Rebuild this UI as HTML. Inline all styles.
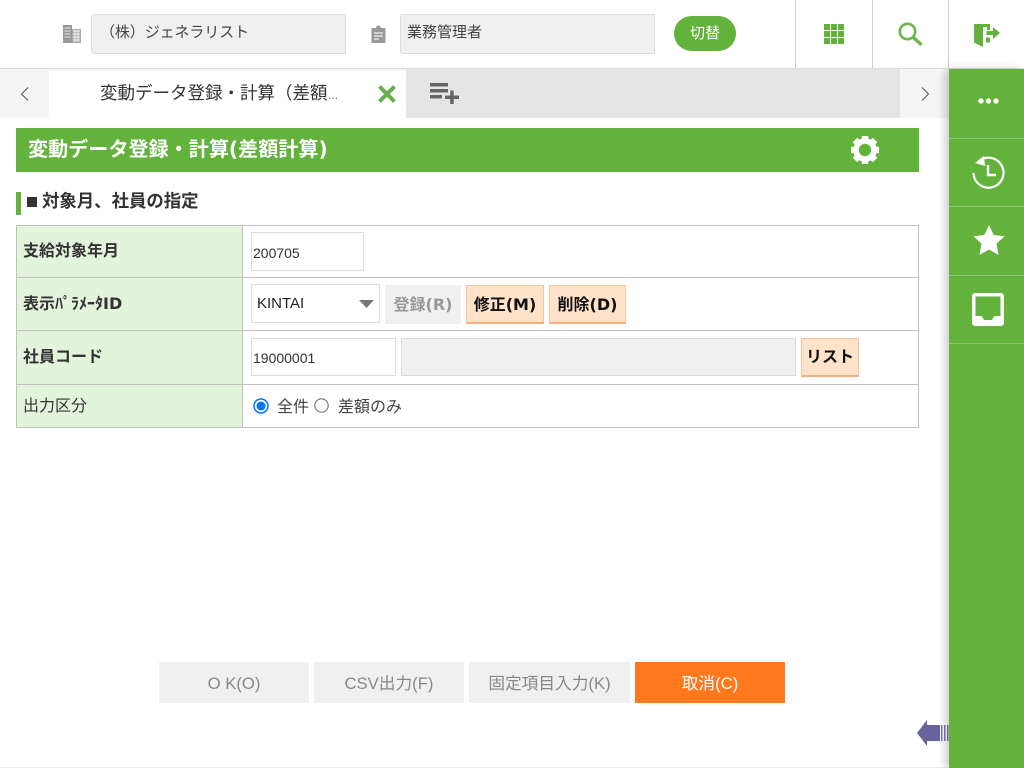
<!DOCTYPE html>
<html lang="ja"><head><meta charset="utf-8"><title>変動データ登録・計算</title>
<style>
html,body{margin:0;padding:0;width:1024px;height:768px;overflow:hidden;background:#fff}
body{position:relative;font-family:"Liberation Sans","Noto Sans CJK JP",sans-serif;color:#333;font-size:15px}
.a{position:absolute;box-sizing:border-box;white-space:nowrap}
.dj{font-family:"DejaVu Sans","Noto Sans CJK JP",sans-serif}
.f{background:#f0f0f0;border:1px solid #dcdcdc;line-height:36px;font-size:15px;color:#444}
.v{background:#d0d0d0;width:1px;top:0;height:68px}
.lab{left:17px;width:225px;background:#e3f4dc}
.lt{left:23px;font-size:16px;color:#333;line-height:22px}
.inp{background:#fff;border:1px solid #dcdcdc;font-size:14px;color:#333;padding-left:1px}
.btn{background:#ffe3c8;border:1px solid #f7c39c;border-bottom:2px solid #f5ae7c;color:#111;font-weight:bold;font-size:16px;text-align:center;line-height:37px}
.bb{top:662px;height:41px;background:#f0f0f0;color:#888;text-align:center;font-size:16.700px;line-height:43px}
.hl{left:17px;width:901px;height:1px;background:#c0c0c0}
.sd{left:949px;width:75px;height:1px;background:#8cc673}
</style></head><body>
<div class="a" style="left:0;top:0;width:1024px;height:69px;background:#fff;border-bottom:1px solid #ddd;box-shadow:0 1px 2px rgba(0,0,0,.08)"></div>
<svg class="a" style="left:63px;top:25px" width="18" height="18" viewBox="0 0 18 18"><rect x="0" y="0" width="9" height="18" fill="#999"/><path d="M1.500 3h6M1.500 6h6M1.500 9h6M1.500 12h6" stroke="#e4e4e4" stroke-width="1"/><rect x="9" y="4" width="9" height="14" fill="#aaa"/><path d="M10 6h7M10 9h7M10 12h7M10 15h7M12 5v12M15 5v12" stroke="#f2f2f2" stroke-width="1"/></svg>
<div class="a f" style="left:91px;top:14px;width:255px;height:40px;border-radius:3px 0 0 3px;padding-left:8px;letter-spacing:-.1px">（株）ジェネラリスト</div>
<svg class="a" style="left:371px;top:25px" width="15" height="18" viewBox="0 0 15 18"><path d="M1.500 3h3.500a2.500 2.500 0 0 1 5 0h3.500a1 1 0 0 1 1 1v13a1 1 0 0 1-1 1h-12a1 1 0 0 1-1-1v-13a1 1 0 0 1 1-1z" fill="#999"/><path d="M3 8h9M3 11h9M3 14h5" stroke="#f0f0f0" stroke-width="1.300"/></svg>
<div class="a f" style="left:400px;top:14px;width:255px;height:40px;border-radius:3px 0 0 3px;padding-left:6px">業務管理者</div>
<div class="a" style="left:674px;top:16px;width:62px;height:35px;border-radius:18px;background:#62b23c;color:#fff;text-align:center;line-height:35px;font-size:15px">切替</div>
<div class="a v" style="left:795px"></div><div class="a v" style="left:872px"></div><div class="a v" style="left:948px"></div>
<svg class="a" style="left:824px;top:24px" width="20" height="20" viewBox="0 0 20 20" fill="#62b23c"><rect x="0" y="0" width="6" height="6"/><rect x="7" y="0" width="6" height="6"/><rect x="14" y="0" width="6" height="6"/><rect x="0" y="7" width="6" height="6"/><rect x="7" y="7" width="6" height="6"/><rect x="14" y="7" width="6" height="6"/><rect x="0" y="14" width="6" height="6"/><rect x="7" y="14" width="6" height="6"/><rect x="14" y="14" width="6" height="6"/></svg>
<svg class="a" style="left:898px;top:22px" width="25" height="24" viewBox="0 0 25 24"><circle cx="9.500" cy="9.500" r="7.700" fill="none" stroke="#6cb84a" stroke-width="2.600"/><path d="M15.500 15.500L22.500 22" stroke="#6cb84a" stroke-width="3.400" stroke-linecap="round"/></svg>
<svg class="a" style="left:974px;top:24px" width="27" height="24" viewBox="0 0 27 24" fill="#62b23c"><path d="M0 0h16v6h-3V3H9v20L0 18.500z"/><path d="M12 13.500h4v5h-4z"/><path d="M12.500 7h6.500V3l7 6-7 6v-4h-6.500z"/></svg>

<div class="a" style="left:0;top:69px;width:49px;height:49px;background:#f5f5f5"></div>
<div class="a" style="left:406px;top:69px;width:494px;height:49px;background:#e5e5e5"></div>
<div class="a" style="left:900px;top:69px;width:49px;height:49px;background:#f5f5f5"></div>
<svg class="a" style="left:20px;top:86px" width="10" height="16" viewBox="0 0 10 16"><path d="M8 1.500L1.500 8l6.500 6.500" fill="none" stroke="#555" stroke-width="1"/></svg>
<svg class="a" style="left:920px;top:86px" width="10" height="16" viewBox="0 0 10 16"><path d="M2 1.500L8.500 8 2 14.500" fill="none" stroke="#555" stroke-width="1"/></svg>
<div class="a" style="left:100px;top:81px;font-size:17.500px;line-height:24px;color:#333">変動データ登録・計算（差額<span style="font-size:11px;color:#666">…</span></div>
<svg class="a" style="left:377px;top:84px" width="20" height="20" viewBox="0 0 20 20"><path d="M2.500 2.500l15 15M17.500 2.500l-15 15" stroke="#69ad4c" stroke-width="4"/></svg>
<svg class="a" style="left:430px;top:83px" width="30" height="22" viewBox="0 0 30 22" fill="#666"><rect x="0" y="0" width="18" height="3.500"/><rect x="0" y="6" width="18" height="3.500"/><rect x="0" y="12" width="12" height="3.500"/><rect x="15" y="12.500" width="14" height="3.500"/><rect x="20.200" y="7.500" width="3.500" height="13.500"/></svg>

<div class="a" style="left:16px;top:128px;width:903px;height:44px;background:#62b23c"></div>
<div class="a dj" style="left:28px;top:134px;color:#fff;font-weight:bold;font-size:20.100px;line-height:30px">変動データ登録・計算(差額計算)</div>
<svg class="a" style="left:851px;top:136px" width="28" height="28" viewBox="0 0 28 28"><circle cx="14" cy="14" r="9" fill="none" stroke="#fff" stroke-width="5.500"/><g stroke="#fff" stroke-width="6.500"><path d="M14 0v5M14 23v5M0 14h5M23 14h5M4 4l3.500 3.500M20.500 20.500L24 24M24 4l-3.500 3.500M7.500 20.500L4 24"/></g></svg>

<div class="a" style="left:16px;top:192px;width:5px;height:23px;background:#62b23c"></div>
<div class="a" style="left:27px;top:190px;font-weight:bold;font-size:17.400px;line-height:23px;color:#333"><span style="display:inline-block;width:10px;height:10px;background:#333;margin-right:5px"></span>対象月、社員の指定</div>

<div class="a lab" style="top:226px;height:51px"></div>
<div class="a lab" style="top:278px;height:52px"></div>
<div class="a lab" style="top:331px;height:53px"></div>
<div class="a lab" style="top:385px;height:42px"></div>
<div class="a" style="left:16px;top:225px;width:903px;height:203px;border:1px solid #c0c0c0"></div>
<div class="a hl" style="top:277px"></div><div class="a hl" style="top:330px"></div><div class="a hl" style="top:384px"></div>
<div class="a" style="left:242px;top:226px;width:1px;height:201px;background:#c0c0c0"></div>
<div class="a lt" style="top:241px;font-weight:bold">支給対象年月</div>
<div class="a lt dj" style="top:293px;font-weight:bold;font-size:16px">表示ﾊﾟﾗﾒｰﾀID</div>
<div class="a lt" style="top:347px;font-weight:bold">社員コード</div>
<div class="a lt" style="top:396px">出力区分</div>

<div class="a inp" style="left:251px;top:232px;width:113px;height:39px;line-height:40px">200705</div>
<div class="a inp" style="left:251px;top:284px;width:129px;height:39px;line-height:38px;padding-left:5px;font-size:15px;color:#222">KINTAI</div>
<svg class="a" style="left:359px;top:300px" width="15" height="8"><path d="M0 0h15L7.500 8z" fill="#777"/></svg>
<div class="a dj" style="left:385px;top:285px;width:76px;height:39px;background:#f0f0f0;color:#999;font-weight:bold;font-size:16px;text-align:center;line-height:39px">登録(R)</div>
<div class="a btn dj" style="left:466px;top:285px;width:78px;height:39px">修正(M)</div>
<div class="a btn dj" style="left:549px;top:285px;width:77px;height:39px">削除(D)</div>
<div class="a inp" style="left:251px;top:338px;width:145px;height:38px;line-height:38px">19000001</div>
<div class="a" style="left:401px;top:338px;width:395px;height:38px;background:#f0f0f0;border:1px solid #dcdcdc"></div>
<div class="a btn" style="left:801px;top:338px;width:58px;height:39px">リスト</div>

<svg class="a" style="left:253px;top:398px" width="16" height="16" viewBox="0 0 16 16"><circle cx="8" cy="8" r="7" fill="#fff" stroke="#0075ff" stroke-width="1.500"/><circle cx="8" cy="8" r="4.500" fill="#0075ff"/></svg>
<div class="a" style="left:277px;top:396px;line-height:23px;color:#444;font-size:16px">全件</div>
<svg class="a" style="left:314px;top:398px" width="15" height="15" viewBox="0 0 15 15"><circle cx="7.500" cy="7.500" r="6.700" fill="#fff" stroke="#777" stroke-width="1.100"/></svg>
<div class="a" style="left:338px;top:396px;line-height:23px;color:#444;font-size:16px">差額のみ</div>

<div class="a bb" style="left:159px;width:150px">O K(O)</div>
<div class="a bb" style="left:314px;width:150px">CSV出力(F)</div>
<div class="a bb" style="left:469px;width:161px">固定項目入力(K)</div>
<div class="a bb" style="left:635px;width:150px;background:#ff781e;color:#fff">取消(C)</div>

<svg class="a" style="left:917px;top:720px" width="32" height="26" viewBox="0 0 32 26"><path d="M0 13L10 0v5h13v16H10v5z" fill="#68629e"/><path d="M24 5h1.500v16H24zM27 5h1.500v16H27zM30 5h1.500v16H30z" fill="#7d78ae"/></svg>

<div class="a" style="left:0;top:767px;width:949px;height:1px;background:#eee"></div>
<div class="a" style="left:949px;top:69px;width:75px;height:699px;background:#62b23c;box-shadow:-4px 0 8px rgba(0,0,0,.2)"></div>
<div class="a sd" style="top:138px"></div><div class="a sd" style="top:206px"></div><div class="a sd" style="top:275px"></div><div class="a sd" style="top:343px"></div>
<svg class="a" style="left:978px;top:98px" width="21" height="6" viewBox="0 0 21 6" fill="#fff"><circle cx="3" cy="3" r="2.700"/><circle cx="10.500" cy="3" r="2.700"/><circle cx="18" cy="3" r="2.700"/></svg>
<svg class="a" style="left:971px;top:155px" width="34" height="36" viewBox="0 0 34 36"><path d="M7.500 6.500A15 15 0 1 1 2.500 18" fill="none" stroke="#fff" stroke-width="2.200"/><path d="M4 8L13 1l1 10z" fill="#fff"/><path d="M17 10v10h8" fill="none" stroke="#fff" stroke-width="2.400"/></svg>
<svg class="a" style="left:973px;top:224px" width="32" height="32" viewBox="0 0 32 32"><path d="M16 1l4.700 10 10.800 1.300-8 7.400L25.600 31 16 25.500 6.400 31l2.100-11.300-8-7.400L11.300 11z" fill="#fff"/></svg>
<svg class="a" style="left:972px;top:293px" width="32" height="33" viewBox="0 0 32 33"><path fill-rule="evenodd" d="M3 0h26a3 3 0 0 1 3 3v27a3 3 0 0 1-3 3H3a3 3 0 0 1-3-3V3a3 3 0 0 1 3-3zM3.500 3.500v19.500h6l2.500 4h8l2.500-4h6V3.500z" fill="#fff"/></svg>
</body></html>
